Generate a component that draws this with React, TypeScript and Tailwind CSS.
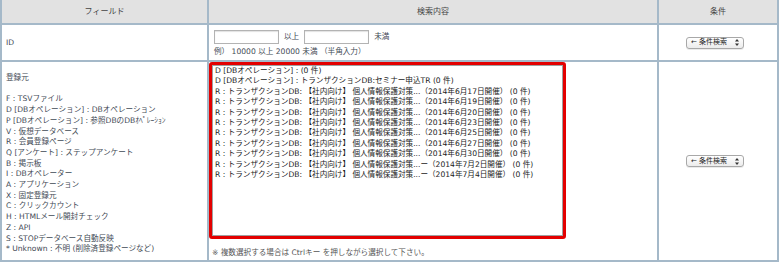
import React from 'react';

const sources = [
  'F : TSVファイル',
  'D [DBオペレーション] : DBオペレーション',
  'P [DBオペレーション] : 参照DBのDBｵﾍﾟﾚｰｼｮﾝ',
  'V : 仮想データベース',
  'R : 会員登録ページ',
  'Q [アンケート] : ステップアンケート',
  'B : 掲示板',
  'I : DBオペレーター',
  'A : アプリケーション',
  'X : 固定登録元',
  'C : クリックカウント',
  'H : HTMLメール開封チェック',
  'Z : API',
  'S : STOPデータベース自動反映',
  '* Unknown : 不明 (削除済登録ページなど)',
];

const seminar = 'R : トランザクションDB: 【社内向け】 個人情報保護対策...';

const options = [
  'D [DBオペレーション] : (0 件)',
  'D [DBオペレーション] : トランザクションDB:セミナー申込TR (0 件)',
  `${seminar}（2014年6月17日開催） (0 件)`,
  `${seminar}（2014年6月19日開催） (0 件)`,
  `${seminar}（2014年6月20日開催） (0 件)`,
  `${seminar}（2014年6月23日開催） (0 件)`,
  `${seminar}（2014年6月25日開催） (0 件)`,
  `${seminar}（2014年6月27日開催） (0 件)`,
  `${seminar}（2014年6月30日開催） (0 件)`,
  `${seminar}ー（2014年7月2日開催） (0 件)`,
  `${seminar}ー（2014年7月4日開催） (0 件)`,
];

function ConditionSelect() {
  return (
    <div className="flex h-[12px] w-[58px] items-center justify-between rounded-[3px] border border-[#a8a8a8] bg-gradient-to-b from-white to-[#ececec] px-[4px] text-[7px] leading-none text-[#222] shadow-[0_1px_0_rgba(0,0,0,0.08)]">
      <span>← 条件検索</span>
      <svg width="4" height="7" viewBox="0 0 4 7" className="fill-[#333]">
        <path d="M2 0 L4 2.6 H0 Z" />
        <path d="M2 7 L4 4.4 H0 Z" />
      </svg>
    </div>
  );
}

function NumberBox() {
  return <div className="h-[14px] w-[65px] border border-[#b3b3b3] bg-white shadow-[inset_0_1px_1px_rgba(0,0,0,0.12)]" />;
}

export default function App() {
  return (
    <div className="min-h-screen bg-white font-['DejaVu_Sans','Noto_Sans_CJK_JP',sans-serif] text-[7.6px] text-[#3f4a55]">
      <div className="grid w-[779px] grid-cols-[207px_450px_120px] grid-rows-[25px_37px_200px] border-l-2 border-[#a5b9c9]">
        {/* header */}
        <div className="flex items-center justify-center border-b-2 border-r-2 border-[#a5b9c9] bg-[#e2e2e2] text-[8px] text-[#444]">フィールド</div>
        <div className="flex items-center justify-center border-b-2 border-r-2 border-[#a5b9c9] bg-[#e2e2e2] text-[8px] text-[#444]">検索内容</div>
        <div className="flex items-center justify-center border-b-2 border-r-2 border-[#a5b9c9] bg-[#e2e2e2] text-[8px] text-[#444]">条件</div>

        {/* ID row */}
        <div className="flex items-center border-b-2 border-r-2 border-[#a5b9c9] pl-[4px]">ID</div>
        <div className="flex flex-col border-b-2 border-r-2 border-[#a5b9c9] pl-[5px] pt-[5px]">
          <div className="flex items-center gap-[5px]">
            <NumberBox />
            <span>以上</span>
            <NumberBox />
            <span>未満</span>
          </div>
          <div className="mt-[3px] leading-[10px]">例） 10000 以上 20000 未満 （半角入力）</div>
        </div>
        <div className="flex items-center justify-center border-b-2 border-r-2 border-[#a5b9c9] pr-[6px]">
          <ConditionSelect />
        </div>

        {/* source row */}
        <div className="flex flex-col border-b-2 border-r-2 border-[#a5b9c9] pl-[4px] pt-[11px] leading-[10.7px]">
          <div className="mb-[10.7px]">登録元</div>
          {sources.map((s) => (
            <div key={s} className="whitespace-nowrap">{s}</div>
          ))}
        </div>
        <div className="flex flex-col border-b-2 border-r-2 border-[#a5b9c9]">
          <div className="h-[177px] w-[357px] rounded-[3px] border-[3px] border-[#e30000]">
            <div className="h-full border border-[#a0a0a0] bg-white pl-[2px] text-[#1a1a1a]">
              {options.map((o, i) => (
                <div key={i} className="whitespace-nowrap leading-[10.4px]">{o}</div>
              ))}
            </div>
          </div>
          <div className="mt-[9px] pl-[3px] leading-[10px] text-[#555]">※ 複数選択する場合は Ctrlキー を押しながら選択して下さい。</div>
        </div>
        <div className="flex items-center justify-center border-b-2 border-r-2 border-[#a5b9c9] pr-[6px]">
          <ConditionSelect />
        </div>
      </div>
    </div>
  );
}
